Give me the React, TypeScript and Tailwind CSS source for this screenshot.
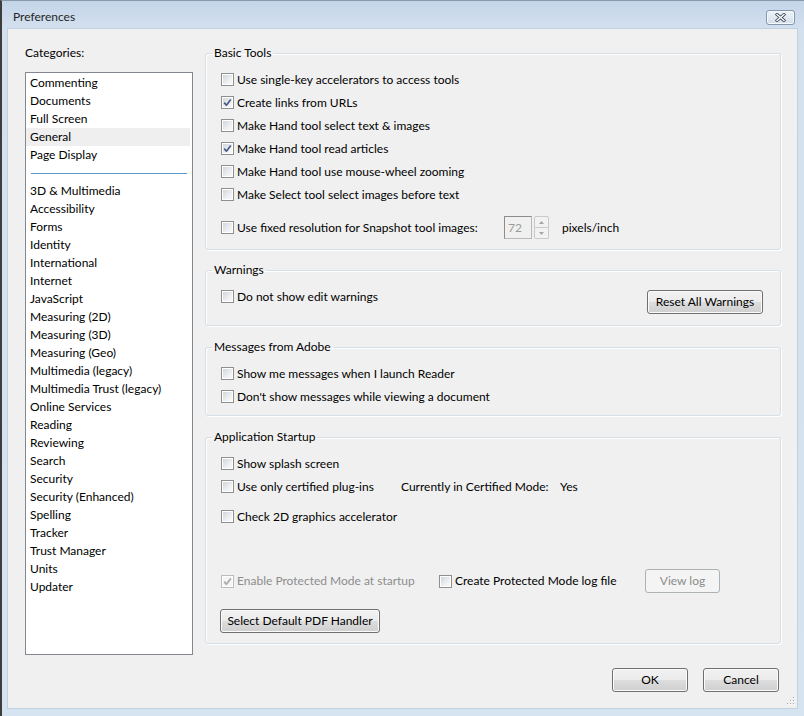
import React from "react";

const TOP_CATEGORIES = ["Commenting", "Documents", "Full Screen", "General", "Page Display"];
const MORE_CATEGORIES = [
  "3D & Multimedia",
  "Accessibility",
  "Forms",
  "Identity",
  "International",
  "Internet",
  "JavaScript",
  "Measuring (2D)",
  "Measuring (3D)",
  "Measuring (Geo)",
  "Multimedia (legacy)",
  "Multimedia Trust (legacy)",
  "Online Services",
  "Reading",
  "Reviewing",
  "Search",
  "Security",
  "Security (Enhanced)",
  "Spelling",
  "Tracker",
  "Trust Manager",
  "Units",
  "Updater",
];

const BASIC_TOOLS: [string, boolean][] = [
  ["Use single-key accelerators to access tools", false],
  ["Create links from URLs", true],
  ["Make Hand tool select text & images", false],
  ["Make Hand tool read articles", true],
  ["Make Hand tool use mouse-wheel zooming", false],
  ["Make Select tool select images before text", false],
];

export default function App() {
  return (
    <div
      className="flex h-[716px] w-[804px] flex-col overflow-hidden border-l-2 border-t border-l-[#3d3d3d] border-t-[#8a98a8] bg-[linear-gradient(to_bottom,#c4d5e9_0px,#d3e0ee_28px,#d6e3f1_100%)] text-[12px] leading-[16px] text-black"
      style={{ fontFamily: "Lato, 'Noto Sans', sans-serif" }}
    >
      <div className="flex h-[28px] shrink-0 items-center justify-between pl-[11px] pr-[9px] pt-[4px]">
        <span className="text-[#262626]">Preferences</span>
        <CloseButton />
      </div>

      <div className="relative mb-[8px] ml-[6px] mr-[7px] flex flex-1 flex-col bg-[#f0f0f0] shadow-[0_0_0_1px_#c2d1e1]">
        <div className="flex pl-[17px]">
          <div className="flex w-[168px] flex-col pt-[16px]">
            <span className="h-[16px]">Categories:</span>
            <div className="mt-[11px] h-[583px] border border-[#828790] bg-white pt-[1px]">
              {TOP_CATEGORIES.map((c) => (
                <ListItem key={c} label={c} selected={c === "General"} />
              ))}
              <div className="flex h-[18px] items-center px-[5px]">
                <div className="h-px w-full bg-[#5b97c9]" />
              </div>
              {MORE_CATEGORIES.map((c) => (
                <ListItem key={c} label={c} />
              ))}
            </div>
          </div>

          <div className="ml-[12px] flex w-[576px] flex-col pt-[16px]">
            <Group title="Basic Tools">
              <div className="pb-[10px] pt-[7px]">
                {BASIC_TOOLS.map(([label, checked]) => (
                  <Check key={label} label={label} checked={checked} />
                ))}
                <div className="mt-[10px] flex h-[23px] items-center">
                  <div className="w-[283px]">
                    <Check label="Use fixed resolution for Snapshot tool images:" />
                  </div>
                  <div className="flex h-[23px] w-[28px] items-center border border-[#b8b8b8] border-l-[#8c8c8c] border-t-[#8c8c8c] bg-[#f0f0f0] pl-[3px] text-[#9a9a9a]">
                    72
                  </div>
                  <Spinner />
                  <span className="ml-[13px]">pixels/inch</span>
                </div>
              </div>
            </Group>

            <div className="mt-[12px]">
              <Group title="Warnings">
                <div className="flex items-start justify-between pb-[11px] pr-[17px] pt-[7px]">
                  <Check label="Do not show edit warnings" />
                  <Button className="mt-[5px] w-[116px]">Reset All Warnings</Button>
                </div>
              </Group>
            </div>

            <div className="mt-[13px]">
              <Group title="Messages from Adobe">
                <div className="pb-[7px] pt-[7px]">
                  <Check label="Show me messages when I launch Reader" />
                  <Check label="Don't show messages while viewing a document" />
                </div>
              </Group>
            </div>

            <div className="mt-[13px]">
              <Group title="Application Startup">
                <div className="pb-[10px] pt-[7px]">
                  <Check label="Show splash screen" />
                  <div className="flex h-[23px] items-center">
                    <div className="w-[180px]">
                      <Check label="Use only certified plug-ins" />
                    </div>
                    <span className="w-[159px]">Currently in Certified Mode:</span>
                    <span>Yes</span>
                  </div>
                  <div className="mt-[7px]">
                    <Check label="Check 2D graphics accelerator" />
                  </div>
                  <div className="mt-[41px] flex h-[24px] items-center">
                    <div className="w-[218px]">
                      <Check label="Enable Protected Mode at startup" checked disabled />
                    </div>
                    <div className="w-[206px]">
                      <Check label="Create Protected Mode log file" />
                    </div>
                    <Button className="w-[75px]" disabled>
                      View log
                    </Button>
                  </div>
                  <Button className="-ml-px mt-[16px] w-[160px]">Select Default PDF Handler</Button>
                </div>
              </Group>
            </div>
          </div>
        </div>

        <div className="mt-[13px] flex justify-end pr-[18px]">
          <Button className="w-[76px]">OK</Button>
          <Button className="ml-[15px] w-[76px]">Cancel</Button>
        </div>

        <ResizeGrip />
      </div>
    </div>
  );
}

function ListItem({ label, selected }: { label: string; selected?: boolean }) {
  return (
    <div className={`mr-[2px] h-[18px] pl-[4px] leading-[18px] ${selected ? "bg-[#efefef]" : ""}`}>
      {label}
    </div>
  );
}

function Group({ title, children }: { title: string; children: React.ReactNode }) {
  return (
    <fieldset className="rounded-[3px] border border-[#d5dfe5] shadow-[1px_1px_0_#ffffff,inset_1px_1px_0_#ffffff]">
      <legend className="ml-[6px] px-[2px] leading-[16px]">{title}</legend>
      <div className="pl-[15px]">{children}</div>
    </fieldset>
  );
}

function Check({
  label,
  checked,
  disabled,
}: {
  label: string;
  checked?: boolean;
  disabled?: boolean;
}) {
  return (
    <div className="flex h-[23px] items-center">
      <span
        className={`flex h-[13px] w-[13px] shrink-0 items-center justify-center border shadow-[inset_0_0_0_1px_#ffffff] ${
          disabled
            ? "border-[#bcbcbc] bg-[#f4f4f4]"
            : "border-[#8e8f8f] bg-[linear-gradient(135deg,#cdd1d6_0%,#eef0f2_60%,#fbfbfb_100%)]"
        }`}
      >
        {checked && (
          <svg width="11" height="11" viewBox="0 0 11 11">
            <path
              d="M2.2 5.6 L4.4 8.2 L8.8 2.4"
              fill="none"
              stroke={disabled ? "#a8a8a8" : "#4a5c88"}
              strokeWidth="1.7"
              strokeLinejoin="round"
            />
          </svg>
        )}
      </span>
      <span className={`ml-[3px] whitespace-nowrap ${disabled ? "text-[#8d8d8d]" : ""}`}>{label}</span>
    </div>
  );
}

function Button({
  children,
  className = "",
  disabled,
}: {
  children: React.ReactNode;
  className?: string;
  disabled?: boolean;
}) {
  return (
    <button
      type="button"
      disabled={disabled}
      className={`flex h-[24px] items-center justify-center rounded-[3px] border ${
        disabled
          ? "border-[#adb2b5] bg-[#f4f4f4] text-[#8b8b8b]"
          : "border-[#707070] bg-[linear-gradient(to_bottom,#f2f2f2_0%,#ebebeb_50%,#dddddd_51%,#cfcfcf_100%)] shadow-[inset_0_0_0_1px_#fbfbfb]"
      } ${className}`}
    >
      {children}
    </button>
  );
}

function Spinner() {
  return (
    <div className="ml-[2px] flex h-[23px] w-[15px] flex-col">
      <div className="flex flex-1 items-center justify-center rounded-t-[2px] border border-[#c9c9c9] bg-[#f2f2f2]">
        <svg width="5" height="3" viewBox="0 0 5 3">
          <path d="M0 3 L2.5 0 L5 3 Z" fill="#a5a5a5" />
        </svg>
      </div>
      <div className="flex flex-1 items-center justify-center rounded-b-[2px] border border-t-0 border-[#c9c9c9] bg-[#f2f2f2]">
        <svg width="5" height="3" viewBox="0 0 5 3">
          <path d="M0 0 L2.5 3 L5 0 Z" fill="#a5a5a5" />
        </svg>
      </div>
    </div>
  );
}

function CloseButton() {
  return (
    <div className="flex h-[15px] w-[29px] items-center justify-center rounded-[3px] border border-[#8797ab] bg-[linear-gradient(to_bottom,#eef3f9,#d4deea)] shadow-[inset_0_0_0_1px_#f6f9fc]">
      <svg width="11" height="9" viewBox="0 0 11 9">
        <path d="M2 1.5 L9 7.5 M9 1.5 L2 7.5" stroke="#3f4b5b" strokeWidth="3" strokeLinecap="square" />
        <path d="M2 1.5 L9 7.5 M9 1.5 L2 7.5" stroke="#ffffff" strokeWidth="1.4" strokeLinecap="square" />
      </svg>
    </div>
  );
}

function ResizeGrip() {
  const dots = [
    [8, 0],
    [8, 3],
    [5, 3],
    [8, 6],
    [5, 6],
    [2, 6],
  ];
  return (
    <svg className="absolute bottom-[2px] right-[2px]" width="10" height="9" viewBox="0 0 10 9">
      {dots.map(([x, y]) => (
        <g key={`${x}-${y}`}>
          <rect x={x + 1} y={y + 1} width="1" height="1" fill="#ffffff" />
          <rect x={x} y={y} width="1" height="1" fill="#a0a8b2" />
        </g>
      ))}
    </svg>
  );
}
